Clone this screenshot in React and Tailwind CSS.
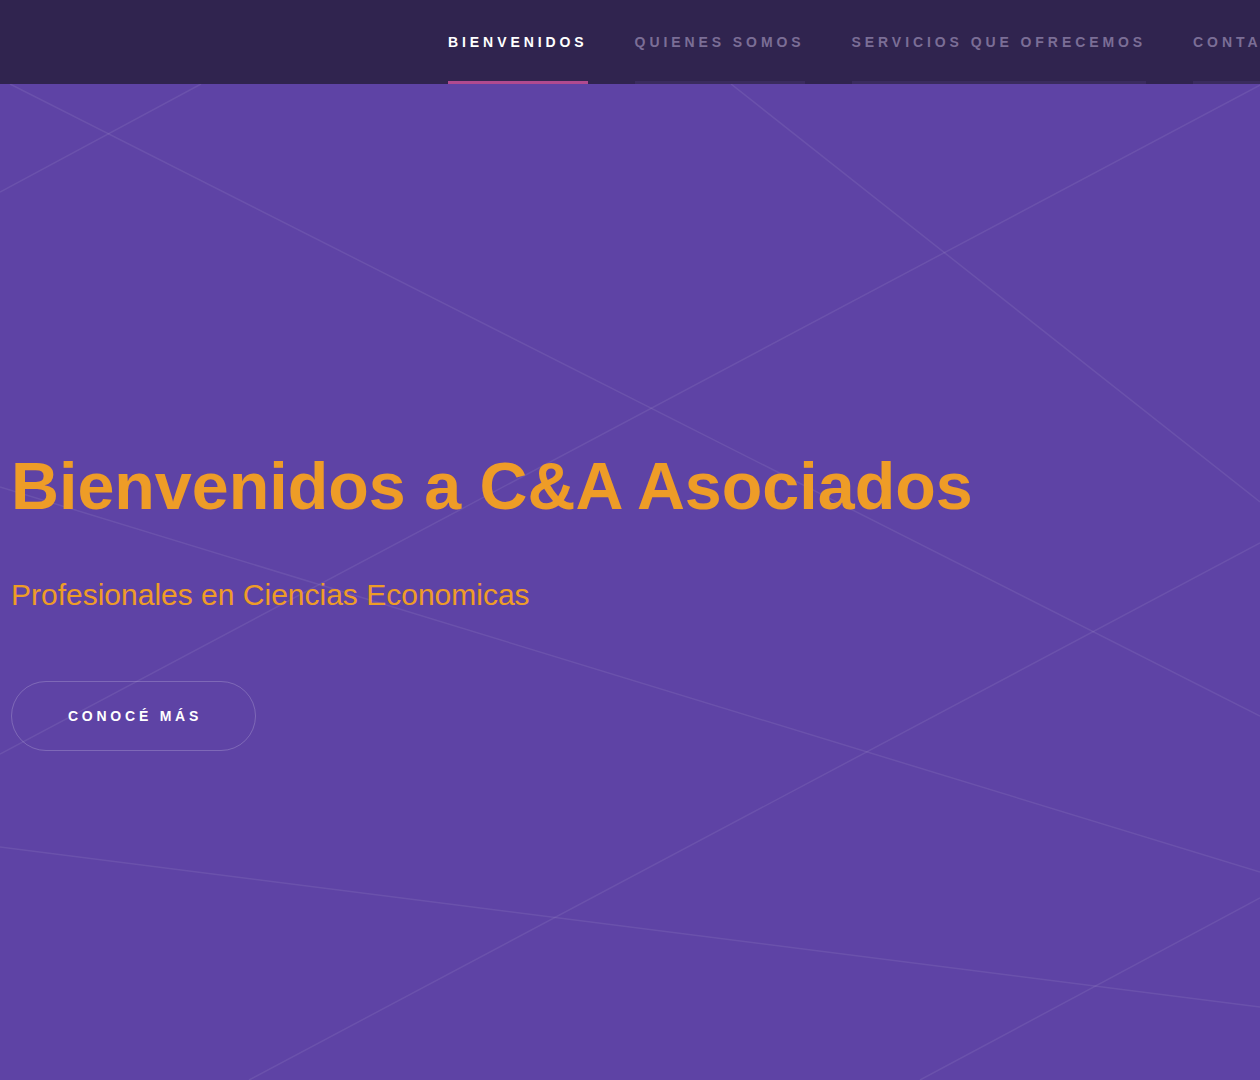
import React from "react";

const navItems = [
  { label: "BIENVENIDOS", active: true },
  { label: "QUIENES SOMOS" },
  { label: "SERVICIOS QUE OFRECEMOS" },
  { label: "CONTACTO" },
];

// background decoration lines, hero coords (hero is 1260x996)
const lines = [
  [201, 0, 0, 108],
  [10, 0, 1260, 632],
  [731, 0, 1260, 418],
  [1262, 0, 0, 670],
  [0, 403, 1260, 788],
  [1260, 459, 249, 996],
  [0, 763, 1260, 923],
  [1260, 814, 920, 996],
];

const Navbar = () => (
  <nav className="h-[84px] bg-[#30244f] flex items-stretch pl-[448px] gap-[47px] overflow-hidden whitespace-nowrap">
    {navItems.map((item) => (
      <a
        key={item.label}
        href="#"
        className={`flex items-center border-b-[3px] pt-[3px] text-[14px] font-bold tracking-[0.28em] ${
          item.active ? "text-white border-[#b04a8f]" : "text-[#7b6e96] border-[#3a2c5e]"
        }`}
      >
        {item.label}
      </a>
    ))}
  </nav>
);

const App = () => {
  return (
    <div className="min-h-screen bg-[#5e43a5] font-['Liberation_Sans',Arial,sans-serif]">
      <Navbar />
      <section className="relative h-[996px] overflow-hidden bg-[#5e43a5]">
        <svg className="absolute inset-0 w-full h-full" viewBox="0 0 1260 996" preserveAspectRatio="none">
          {lines.map(([x1, y1, x2, y2], i) => (
            <line key={i} x1={x1} y1={y1} x2={x2} y2={y2} stroke="rgba(255,255,255,0.08)" strokeWidth="1.5" />
          ))}
        </svg>
        <div className="relative pl-[11px] pt-[369px]">
          <h1 className="text-[66.4px] leading-none font-bold text-[#ee9c27]">Bienvenidos a C&amp;A Asociados</h1>
          <p className="mt-[61px] text-[30px] leading-none text-[#ee9c27]">Profesionales en Ciencias Economicas</p>
          <a
            href="#"
            className="mt-[71px] flex items-center justify-center w-[245px] h-[70px] rounded-full border border-white/20 text-white text-[14px] font-bold tracking-[0.27em] pl-[3px]"
          >
            CONOCÉ MÁS
          </a>
        </div>
      </section>
    </div>
  );
};

export default App;
